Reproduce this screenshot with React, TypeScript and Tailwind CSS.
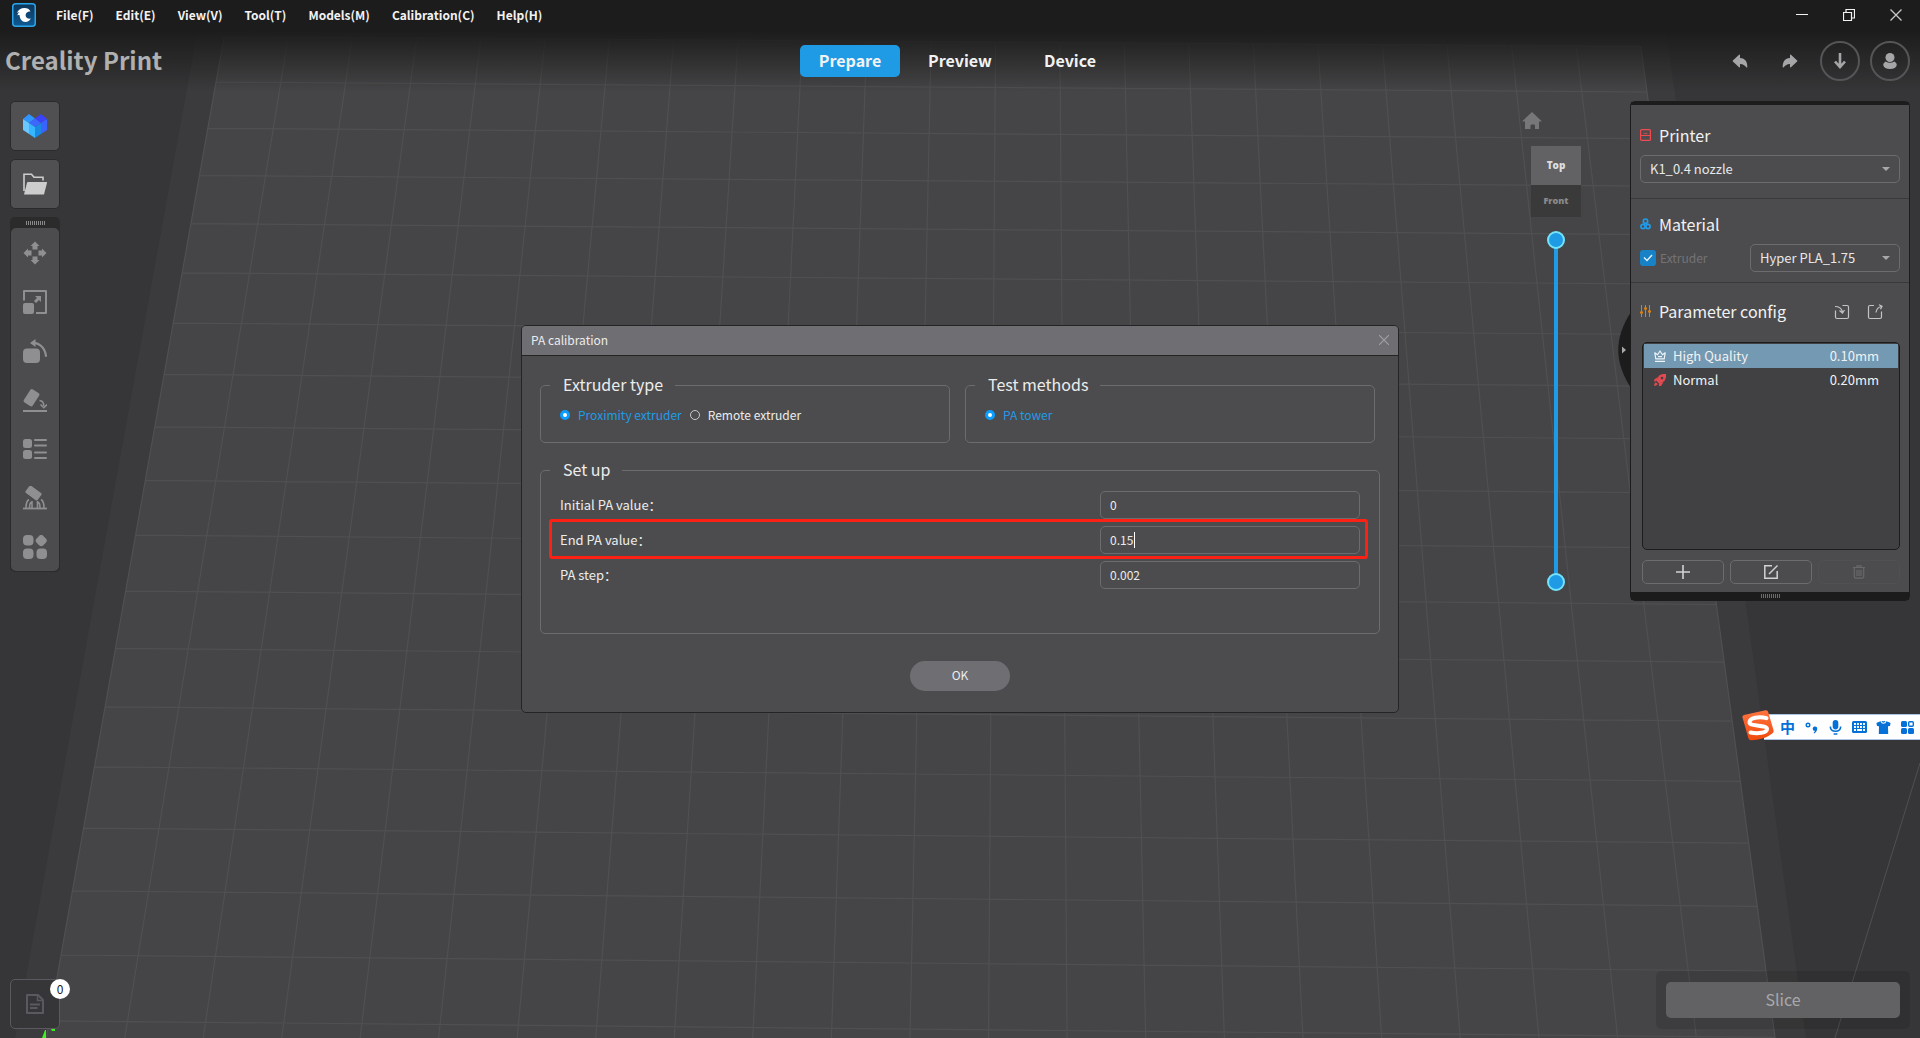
import React from "react";
import { IoArrowUndo, IoArrowRedo, IoShirt } from "react-icons/io5";

type Pt = [number, number];

/* ---------- build plate ---------- */

const COLS = 22;
const ROWS = 16;
const CORNERS: Pt[] = [
  [216, 82],
  [1647, 92],
  [1766, 971],
  [61, 955],
];

function makeProjector([p0, p1, p2, p3]: Pt[]) {
  const dx1 = p1[0] - p2[0];
  const dx2 = p3[0] - p2[0];
  const dx3 = p0[0] - p1[0] + p2[0] - p3[0];
  const dy1 = p1[1] - p2[1];
  const dy2 = p3[1] - p2[1];
  const dy3 = p0[1] - p1[1] + p2[1] - p3[1];
  const den = dx1 * dy2 - dx2 * dy1;
  const g = (dx3 * dy2 - dx2 * dy3) / den;
  const h = (dx1 * dy3 - dx3 * dy1) / den;
  const a = p1[0] - p0[0] + g * p1[0];
  const b = p3[0] - p0[0] + h * p3[0];
  const d = p1[1] - p0[1] + g * p1[1];
  const e = p3[1] - p0[1] + h * p3[1];
  return (col: number, row: number): Pt => {
    const u = col / COLS;
    const v = row / ROWS;
    const w = g * u + h * v + 1;
    return [(a * u + b * v + p0[0]) / w, (d * u + e * v + p0[1]) / w];
  };
}

const project = makeProjector(CORNERS);
const FIRST_ROW = -1;
const LAST_ROW = 18;

function segment(from: Pt, to: Pt) {
  return `M${from[0].toFixed(1)} ${from[1].toFixed(1)}L${to[0].toFixed(1)} ${to[1].toFixed(1)}`;
}

const gridPath = [
  ...Array.from({ length: COLS + 1 }, (_, c) => segment(project(c, FIRST_ROW), project(c, LAST_ROW))),
  ...Array.from({ length: LAST_ROW - FIRST_ROW + 1 }, (_, i) =>
    segment(project(0, i + FIRST_ROW), project(COLS, i + FIRST_ROW)),
  ),
].join("");

const platePoints = [
  project(0, FIRST_ROW),
  project(COLS, FIRST_ROW),
  project(COLS, LAST_ROW),
  project(0, LAST_ROW),
]
  .map((p) => p.join(","))
  .join(" ");

function Scene() {
  return (
    <svg
      className="absolute inset-0 h-full w-full"
      viewBox="0 0 1920 1038"
      preserveAspectRatio="none"
      aria-hidden="true"
    >
      <rect width="1920" height="1038" fill="#363638" />
      <polygon points="203,0 1662,0 1806,1038 15,1038" fill="#3b3b3d" />
      <polygon points={platePoints} fill="#454547" />
      <path d={gridPath} stroke="#505052" strokeWidth="1.2" fill="none" />
      <path d="M1920 763L1835 1038" stroke="#505052" strokeWidth="1" />
      <path d="M45 1030h1v8h-4z" fill="#3df01e" />
      <path d="M51 1029h4v2h-3z" fill="#3df01e" />
    </svg>
  );
}

/* ---------- icons ---------- */

function AppLogo() {
  return (
    <svg className="size-6" viewBox="0 0 24 24" aria-hidden="true">
      <defs>
        <linearGradient id="logoFill" x1="0" y1="0" x2="0" y2="1">
          <stop offset="0" stopColor="#0d3557" />
          <stop offset="1" stopColor="#0f5a94" />
        </linearGradient>
      </defs>
      <rect x="0.75" y="0.75" width="22.5" height="22.5" rx="3" fill="url(#logoFill)" stroke="#2aa5ea" strokeWidth="1.5" />
      <path
        d="M18.500 8.500C17.500 6 15.300 5 12.500 5 9 5 6.300 6.800 5 10c1-.7 1.800-.9 2.500-.8-1.300 1-2 2-2.200 3.300.8-.5 1.500-.6 2.200-.4C7.800 16.200 10 19 13.300 19c2.500 0 4.500-1.200 5.400-3.400-1.500.3-2.800.1-3.700-.6-1.500-1.200-1.800-3.200-.8-4.700.9-1.400 2.500-1.900 4.300-1.800z"
        fill="#fff"
      />
    </svg>
  );
}

function CubesIcon() {
  return (
    <svg className="size-6" viewBox="0 0 24 24" aria-hidden="true">
      <polygon points="0,5 6,0 12,4.500 6,9" fill="#2f96ff" />
      <polygon points="12,4.500 18,0 24,5 18,9" fill="#3a42fb" />
      <polygon points="6,9 12,4.500 18,9 12,13" fill="#3b68ff" />
      <polygon points="0,5 6,9 6,20 0,16" fill="#68c8ff" />
      <polygon points="6,9 12,13 12,24 6,20" fill="#36b6ff" />
      <polygon points="12,13 18,9 18,20 12,24" fill="#1a89e2" />
      <polygon points="18,9 24,5 24,16 18,20" fill="#3a64ff" />
    </svg>
  );
}

function FolderIcon() {
  return (
    <svg className="size-6" viewBox="0 0 24 24" aria-hidden="true">
      <path d="M1 19V2.200h7.500l2.500 3h9v3.300" fill="none" stroke="#cdcdcd" strokeWidth="1.600" />
      <path d="M5 10h18.500q.6 0 .5.700L21 22.500H1L4 10.700q.2-.7 1-.7z" fill="#cdcdcd" />
    </svg>
  );
}

function MoveIcon() {
  const arrow = "M12 0.500l4.500 4.500h-2v3.500h-5V5h-2z";
  return (
    <svg className="size-6" viewBox="0 0 24 24" fill="currentColor" aria-hidden="true">
      <path d={arrow} />
      <path d={arrow} transform="rotate(90 12 12)" />
      <path d={arrow} transform="rotate(180 12 12)" />
      <path d={arrow} transform="rotate(270 12 12)" />
    </svg>
  );
}

function ScaleIcon() {
  return (
    <svg className="size-6" viewBox="0 0 24 24" fill="currentColor" aria-hidden="true">
      <path d="M1 10.500V1h22v22H13" fill="none" stroke="currentColor" strokeWidth="2" strokeLinejoin="round" />
      <rect x="0" y="13" width="11" height="11" rx="2" />
      <path d="M12 12l4-4" stroke="currentColor" strokeWidth="3" />
      <path d="M12 6h6v6z" />
    </svg>
  );
}

function RotateIcon() {
  return (
    <svg className="size-6" viewBox="0 0 24 24" fill="currentColor" aria-hidden="true">
      <rect x="0" y="9.500" width="17" height="14.500" rx="4" />
      <path d="M10 3.800c7 0 12.500 6 13 14" fill="none" stroke="currentColor" strokeWidth="2.200" />
      <path d="M7 4l5.500-4v8z" />
    </svg>
  );
}

function LayFlatIcon() {
  return (
    <svg className="size-6" viewBox="0 0 24 24" fill="currentColor" aria-hidden="true">
      <rect x="3.300" y="2" width="10.500" height="15.500" rx="2" transform="rotate(33 8.500 9.700)" />
      <rect x="0" y="22" width="24" height="2" />
      <path d="M16.500 12.500c2.800.2 4.300 2.200 4.300 5.500" fill="none" stroke="currentColor" strokeWidth="1.600" />
      <path d="M17.500 16.500l3.300 3.200 3.200-3.200" fill="none" stroke="currentColor" strokeWidth="1.600" />
    </svg>
  );
}

function ListIcon() {
  return (
    <svg className="size-6" viewBox="0 0 24 24" fill="currentColor" aria-hidden="true">
      <rect x="0" y="2" width="9" height="9" rx="2.500" />
      <rect x="0" y="13" width="9" height="9" rx="2.500" />
      <path d="M12 3h11M12 8.500h11M12 15.500h11M12 21h11" stroke="currentColor" strokeWidth="2" strokeLinecap="round" />
    </svg>
  );
}

function SupportIcon() {
  return (
    <svg className="size-6" viewBox="0 0 24 24" fill="currentColor" aria-hidden="true">
      <rect x="3" y="2.500" width="15" height="9" rx="1.500" transform="rotate(36 10.500 7)" />
      <path d="M0 22.500h24" stroke="currentColor" strokeWidth="1.800" />
      <path
        d="M3 22c0-4 .5-7 3-8.500M9 22v-7M14.500 22v-7M21 22c0-4-.5-7-3-8.500M9 16c-2.500 0-2.500 3-2.500 6M14.500 16c2.500 0 2.500 3 2.500 6"
        fill="none"
        stroke="currentColor"
        strokeWidth="1.600"
      />
    </svg>
  );
}

function MoreToolsIcon() {
  return (
    <svg className="size-6" viewBox="0 0 24 24" fill="currentColor" aria-hidden="true">
      <rect x="0" y="0" width="10.500" height="10.500" rx="4" />
      <rect x="13.500" y="0.800" width="9.500" height="9.500" rx="3" transform="rotate(45 18.250 5.500)" />
      <rect x="0" y="13.500" width="10.500" height="10.500" rx="4" />
      <rect x="13.500" y="13.500" width="10.500" height="10.500" rx="4" />
    </svg>
  );
}

function PrinterIcon() {
  return (
    <svg className="h-3 w-[11px]" viewBox="0 0 11 12" fill="none" stroke="#ef4a4f" aria-hidden="true">
      <rect x="0.600" y="0.600" width="9.800" height="10.800" rx="1" strokeWidth="1.200" />
      <path d="M0.600 6.500h9.800" />
      <path d="M3.500 4.500h4" strokeWidth="1.500" opacity=".6" />
    </svg>
  );
}

function MaterialIcon() {
  return (
    <svg className="h-3 w-[11px]" viewBox="0 0 11 12" fill="none" stroke="#219bea" strokeWidth="1.700" aria-hidden="true">
      <circle cx="5.500" cy="3.200" r="2.200" />
      <circle cx="3" cy="8.500" r="2.100" />
      <circle cx="8" cy="8.500" r="2.100" />
    </svg>
  );
}

function SlidersIcon() {
  return (
    <svg className="h-3 w-[11px]" viewBox="0 0 11 12" stroke="#d9820f" fill="#d9820f" aria-hidden="true">
      <path d="M1.500 0v12M5.500 0v12M9.500 0v12" strokeWidth="1" />
      <path d="M0 7.500h3M4 3.500h3M8 6.500h3" strokeWidth="2" />
    </svg>
  );
}

function ImportIcon() {
  return (
    <svg className="size-4" viewBox="0 0 16 16" fill="none" stroke="#c4c4c6" strokeWidth="1.200" aria-hidden="true">
      <path d="M8.500 1.500H13q1.500 0 1.500 1.500v10q0 1.500-1.500 1.500H3q-1.500 0-1.500-1.500V6.500" />
      <path d="M1 2.500c3.500 0 6.500 1.500 7.500 5.500M5.500 6.500l3 2.500 2-3" />
    </svg>
  );
}

function ExportIcon() {
  return (
    <svg className="size-4" viewBox="0 0 16 16" fill="none" stroke="#c4c4c6" strokeWidth="1.200" aria-hidden="true">
      <path d="M7 1.500H3q-1.500 0-1.500 1.500v10q0 1.500 1.500 1.500h10q1.500 0 1.500-1.500V7.500" />
      <path d="M9 8.500c.5-3.500 2-5.500 5.500-6M12 .8l3 1.500-1.500 3" />
    </svg>
  );
}

function CrownIcon() {
  return (
    <svg className="h-3 w-3" viewBox="0 0 12 12" fill="none" stroke="#eef4f8" strokeWidth="1.200" aria-hidden="true">
      <path d="M1.800 8.800L.8 2.800l2.800 2L6 1l2.400 3.800 2.800-2-1 6z" strokeLinejoin="round" />
      <path d="M1 11.400h10M4 6.700h4" />
    </svg>
  );
}

function RocketIcon() {
  return (
    <svg className="h-3 w-3" viewBox="0 0 12 12" fill="#e04a50" fillRule="evenodd" aria-hidden="true">
      <path d="M12 0v3.500L10.500 7 5.500 10 2.300 6.700 5 1.500 8.500 0zM8 2.800a1.300 1.300 0 1 0 0 2.600 1.300 1.300 0 0 0 0-2.600z" />
      <path d="M4 3L.2 5.500.3 7.700 2.500 7zM9.500 8L7 12H5l-.2-2.500z" />
      <path d="M1.800 8.300L.2 10v1.800H2L3.700 10z" />
    </svg>
  );
}

function EditIcon() {
  return (
    <svg className="size-4" viewBox="0 0 16 16" fill="none" stroke="#d2d2d4" strokeWidth="1.500" aria-hidden="true">
      <path d="M9 1.800H1.800v12.400h12.400V7" />
      <path d="M6 10L14.500 1.500" />
    </svg>
  );
}

function TrashIcon() {
  return (
    <svg className="h-[14px] w-3" viewBox="0 0 12 14" fill="none" stroke="#68686a" strokeWidth="1.200" aria-hidden="true">
      <path d="M0 2.500h12M4 2.500V.800h4v1.700M1.300 3v8.500q0 1.700 1.500 1.700h6.400q1.500 0 1.500-1.700V3M4 5v6M6 5v6M8 5v6" />
    </svg>
  );
}

function HomeIcon() {
  return (
    <svg className="h-[17px] w-5" viewBox="0 0 20 17" fill="#77777a" aria-hidden="true">
      <path d="M10 0l10 9.500h-3V17h-4v-3.500q0-1-1-1H10q-1.500 0-1.500 1V17H3V9.500H0z" />
    </svg>
  );
}

function DocumentIcon() {
  return (
    <svg className="h-5 w-[18px]" viewBox="0 0 18 20" fill="none" stroke="#5a595f" strokeWidth="2" aria-hidden="true">
      <path d="M1 1h11l5 5v13H1z" strokeLinejoin="round" />
      <path d="M11.500 1v5.500H17" strokeWidth="1.500" />
      <path d="M4 10.500h10M4 14h7.500" />
    </svg>
  );
}

function SogouLogo() {
  return (
    <svg className="absolute -top-[5px] -left-[22px] h-[31px] w-8" viewBox="0 0 32 31" aria-hidden="true">
      <defs>
        <linearGradient id="sogou" x1="0" y1="0" x2="0" y2="1">
          <stop offset="0" stopColor="#ff7440" />
          <stop offset="1" stopColor="#f04a0c" />
        </linearGradient>
      </defs>
      <path d="M2 5L23.500.3q2-.4 2.600 1.500L31.500 20q.6 2-1 3.200C26 27 20 29.500 9 30.200q-2 .1-2.500-1.700L.5 7.500Q0 5.500 2 5z" fill="url(#sogou)" />
      <path d="M24.500 8.200C17 5.800 7.500 8 7.500 12.200c0 4.800 17.500 2.300 17.500 6.800 0 4-9.500 5-16.500 3.500" fill="none" stroke="#fff" strokeWidth="4" strokeLinecap="round" />
    </svg>
  );
}

/* ---------- header ---------- */

const MENUS = ["File(F)", "Edit(E)", "View(V)", "Tool(T)", "Models(M)", "Calibration(C)", "Help(H)"];
const TABS = ["Prepare", "Preview", "Device"];

function Header() {
  return (
    <header className="bg-linear-to-b from-[#1c1c1c] from-33% to-transparent">
      <div className="flex h-[30px] items-center justify-between pl-3">
        <div className="flex items-center gap-5">
          <AppLogo />
          <nav className="flex gap-[22px] text-xs leading-5 font-bold">
            {MENUS.map((menu) => (
              <button key={menu} type="button">
                {menu}
              </button>
            ))}
          </nav>
        </div>
        <div className="flex items-center gap-[35px] pr-[18px] text-[#f2f2f2]">
          <button type="button" aria-label="Minimize">
            <svg className="size-3" viewBox="0 0 12 12" aria-hidden="true">
              <path d="M0 5.500h12" stroke="currentColor" />
            </svg>
          </button>
          <button type="button" aria-label="Restore">
            <svg className="size-3" viewBox="0 0 12 12" fill="none" stroke="currentColor" aria-hidden="true">
              <path d="M.5 3.500h8v8h-8zM3 3V.5h8.500V9H9" strokeWidth="1.200" />
            </svg>
          </button>
          <button type="button" aria-label="Close">
            <svg className="size-3" viewBox="0 0 12 12" stroke="#c8c8c8" strokeWidth="1.300" aria-hidden="true">
              <path d="M.5.5l11 11M11.500.5l-11 11" />
            </svg>
          </button>
        </div>
      </div>
      <div className="grid h-[62px] grid-cols-[1fr_auto_1fr] items-center">
        <h1 className="pb-0.5 pl-[5px] text-2xl font-bold text-[#b0b0b0]">Creality Print</h1>
        <nav className="flex gap-[10px] text-base leading-[30px] font-bold">
          {TABS.map((tab, i) => (
            <button
              key={tab}
              type="button"
              aria-current={i === 0 ? "page" : undefined}
              className={i === 0 ? "h-8 w-[100px] rounded-[5px] bg-[#1f9be6] pb-0.5" : "h-8 w-[100px] pb-0.5"}
            >
              {tab}
            </button>
          ))}
        </nav>
        <div className="flex items-center justify-end gap-[10px] pr-[10px] text-[#a6a6a9]">
          <button type="button" aria-label="Undo" className="flex size-10 items-center justify-center">
            <IoArrowUndo size={18} />
          </button>
          <button type="button" aria-label="Redo" className="flex size-10 items-center justify-center">
            <IoArrowRedo size={18} />
          </button>
          <button
            type="button"
            aria-label="Downloads"
            className="flex size-10 items-center justify-center rounded-full border-2 border-[#555558]"
          >
            <svg className="h-4 w-3" viewBox="0 0 12 16" fill="none" stroke="currentColor" strokeWidth="2.600" aria-hidden="true">
              <path d="M6 0v14M1 8.500l5 5.500 5-5.500" />
            </svg>
          </button>
          <button
            type="button"
            aria-label="Account"
            className="flex size-10 items-center justify-center rounded-full border-2 border-[#555558]"
          >
            <svg className="h-4 w-[14px]" viewBox="0 0 14 16" fill="currentColor" aria-hidden="true">
              <circle cx="7" cy="4.500" r="4.500" />
              <path d="M2.500 8.500q4.500 2.500 9 0Q14 10 13.800 12 13 16 7 16T.2 12Q0 10 2.500 8.500z" />
            </svg>
          </button>
        </div>
      </div>
    </header>
  );
}

/* ---------- left tools ---------- */

function Grip({ count, tone }: { count: number; tone: string }) {
  return (
    <div className="flex h-1 justify-center gap-px" aria-hidden="true">
      {Array.from({ length: count }, (_, i) => (
        <span key={i} className={`w-px ${tone}`} />
      ))}
    </div>
  );
}

const TOOLS = [
  { name: "Move", Icon: MoveIcon },
  { name: "Scale", Icon: ScaleIcon },
  { name: "Rotate", Icon: RotateIcon },
  { name: "Lay flat", Icon: LayFlatIcon },
  { name: "Model list", Icon: ListIcon },
  { name: "Support", Icon: SupportIcon },
  { name: "More tools", Icon: MoreToolsIcon },
];

function ToolColumn() {
  const single = "flex size-[50px] items-center justify-center rounded-[5px] border border-[#2b2b2c] bg-[#505052]";
  return (
    <aside className="flex flex-col gap-2">
      <button type="button" aria-label="Models" className={single}>
        <CubesIcon />
      </button>
      <button type="button" aria-label="Open file" className={single}>
        <FolderIcon />
      </button>
      <div className="w-[50px] rounded-[5px] bg-[#2b2b2c] px-px pb-px">
        <div className="flex h-[11px] items-center justify-center pt-px">
          <Grip count={10} tone="bg-[#8a8a8c]" />
        </div>
        <div className="flex flex-col rounded-[5px] bg-[#4c4c4e] text-[#8f8f91]">
          {TOOLS.map(({ name, Icon }) => (
            <button key={name} type="button" aria-label={name} className="flex h-[49px] items-center justify-center">
              <Icon />
            </button>
          ))}
        </div>
      </div>
    </aside>
  );
}

/* ---------- view cube and layer slider ---------- */

function ViewControls() {
  const range =
    "pointer-events-none absolute inset-0 h-full w-full appearance-none bg-transparent [direction:rtl] [writing-mode:vertical-lr] [&::-webkit-slider-thumb]:pointer-events-auto [&::-webkit-slider-thumb]:size-[18px] [&::-webkit-slider-thumb]:appearance-none [&::-webkit-slider-thumb]:rounded-full [&::-webkit-slider-thumb]:border-2 [&::-webkit-slider-thumb]:border-[#74e4fb] [&::-webkit-slider-thumb]:bg-[#1f9be6]";
  return (
    <div className="mt-[11px] mr-[49px] flex w-[50px] flex-col items-center font-['Open_Sans',sans-serif]">
      <button type="button" aria-label="Home view" className="mr-12">
        <HomeIcon />
      </button>
      <div className="mt-[17px] flex w-full flex-col font-extrabold">
        <button type="button" className="h-[39px] bg-[#626264] text-[10px] text-[#dcdcdc]">
          Top
        </button>
        <button type="button" className="h-8 bg-[#3a3a3b] text-[9px] text-[#8a8a8a]">
          Front
        </button>
      </div>
      <div className="relative mt-[14px] flex h-[360px] w-[18px] justify-center py-2">
        <div className="w-1 bg-[#1f9be6]" />
        <input type="range" aria-label="Bottom layer" defaultValue={0} className={range} />
        <input type="range" aria-label="Top layer" defaultValue={100} className={range} />
      </div>
    </div>
  );
}

/* ---------- settings panel ---------- */

function Dropdown({ label, value, width }: { label: string; value: string; width: string }) {
  return (
    <div className={`relative ${width}`}>
      <select
        aria-label={label}
        defaultValue={value}
        className="h-7 w-full appearance-none rounded-[5px] border border-[#6c6c6f] bg-transparent px-[9px] text-[13px] leading-5 text-[#e8e8e8]"
      >
        <option>{value}</option>
      </select>
      <svg className="pointer-events-none absolute top-3 right-[10px] h-1 w-2" viewBox="0 0 8 4" aria-hidden="true">
        <path d="M0 0h8L4 4z" fill="#a8a8aa" />
      </svg>
    </div>
  );
}

const PROFILES = [
  { name: "High Quality", height: "0.10mm", selected: true },
  { name: "Normal", height: "0.20mm", selected: false },
];

function SettingsPanel() {
  const heading = "flex h-6 items-center gap-2 pb-0.5 text-base leading-[22px]";
  const action = "flex h-6 flex-1 items-center justify-center rounded-[5px] border";
  return (
    <aside className="relative w-[280px] rounded-[5px] border border-[#1c1c1c] bg-[#4c4c4e]">
      <button
        type="button"
        aria-label="Collapse panel"
        className="absolute top-[210px] -left-[13px] flex h-[76px] w-[13px] items-center"
      >
        <svg className="h-full w-full" viewBox="0 0 13 76" aria-hidden="true">
          <path d="M13 0C-4 26-4 50 13 76z" fill="#1c1c1c" />
          <path d="M4 34.500v7l4-3.500z" fill="#a8a8aa" />
        </svg>
      </button>
      <div className="h-[3px] bg-[#1c1c1c]" />
      <section className="border-b border-[#39393b] px-[9px] pt-[19px] pb-[15px]">
        <h2 className={heading}>
          <PrinterIcon />
          Printer
        </h2>
        <div className="mt-[7px]">
          <Dropdown label="Printer" value="K1_0.4 nozzle" width="w-full" />
        </div>
      </section>
      <section className="border-b border-[#39393b] px-[9px] pt-[14px] pb-[10px]">
        <h2 className={heading}>
          <MaterialIcon />
          Material
        </h2>
        <div className="mt-[7px] flex items-center justify-between">
          <label className="flex items-center gap-[5px] text-xs text-[#737376]">
            <input
              type="checkbox"
              defaultChecked
              className="peer size-4 appearance-none rounded-[3px] bg-[#1882c6]"
            />
            <svg className="pointer-events-none -ml-[18px] mr-[2px] h-2 w-[10px]" viewBox="0 0 10 8" fill="none" stroke="#e4f2fb" strokeWidth="1.400" aria-hidden="true">
              <path d="M1 3.500l3 3L9 1" />
            </svg>
            Extruder
          </label>
          <Dropdown label="Material" value="Hyper PLA_1.75" width="w-[150px]" />
        </div>
      </section>
      <section className="px-[9px] pt-[17px] pb-2">
        <div className="flex items-center justify-between pr-[17px]">
          <h2 className={heading}>
            <SlidersIcon />
            Parameter config
          </h2>
          <div className="flex gap-[17px]">
            <button type="button" aria-label="Import configuration">
              <ImportIcon />
            </button>
            <button type="button" aria-label="Export configuration">
              <ExportIcon />
            </button>
          </div>
        </div>
        <ul className="mt-[18px] ml-0.5 h-52 rounded-[5px] border border-[#1c1c1c] bg-[#414143] p-px text-[13px] leading-6">
          {PROFILES.map((profile) => (
            <li key={profile.name}>
              <button
                type="button"
                aria-pressed={profile.selected}
                className={
                  profile.selected
                    ? "flex h-6 w-full items-center gap-[7px] bg-[#7499b2] pr-[19px] pl-[10px]"
                    : "flex h-6 w-full items-center gap-[7px] pr-[19px] pl-[10px]"
                }
              >
                {profile.selected ? <CrownIcon /> : <RocketIcon />}
                <span>{profile.name}</span>
                <span className="ml-auto">{profile.height}</span>
              </button>
            </li>
          ))}
        </ul>
        <div className="mt-[10px] ml-0.5 flex gap-[6px]">
          <button type="button" aria-label="Add profile" className={`${action} border-[#6c6c6f]`}>
            <svg className="size-[14px]" viewBox="0 0 14 14" stroke="#d2d2d4" strokeWidth="1.600" aria-hidden="true">
              <path d="M7 0v14M0 7h14" />
            </svg>
          </button>
          <button type="button" aria-label="Edit profile" className={`${action} border-[#6c6c6f]`}>
            <EditIcon />
          </button>
          <button type="button" aria-label="Delete profile" disabled className={`${action} border-[#505052]`}>
            <TrashIcon />
          </button>
        </div>
      </section>
      <div className="flex h-2 items-center justify-center bg-[#1c1c1c]">
        <Grip count={10} tone="bg-[#6c6c6f]" />
      </div>
    </aside>
  );
}

/* ---------- dialog ---------- */

function RadioOption({ group, label, checked }: { group: string; label: string; checked?: boolean }) {
  return (
    <label className="flex items-center gap-2 text-xs leading-5 has-checked:text-[#1f9be6]">
      <input
        type="radio"
        name={group}
        defaultChecked={checked}
        className="size-[10px] appearance-none rounded-full border border-[#c8c8c8] checked:border-[3px] checked:border-[#0c9dff] checked:bg-white"
      />
      {label}
    </label>
  );
}

function GroupLegend({ title }: { title: string }) {
  return <legend className="-ml-[10px] pr-3 pb-0.5 pl-[13px] text-base leading-[22px]">{title}</legend>;
}

function OptionGroup({ title, children }: { title: string; children: React.ReactNode }) {
  return (
    <fieldset className="h-[70px] flex-1 rounded-[5px] border border-[#6c6c6f] pl-[19px]">
      <GroupLegend title={title} />
      <div className="mt-2 flex gap-2">{children}</div>
    </fieldset>
  );
}

const FIELDS = [
  { id: "initial-pa", label: "Initial PA value：", value: "0" },
  { id: "end-pa", label: "End PA value：", value: "0.15" },
  { id: "pa-step", label: "PA step：", value: "0.002" },
];

function CalibrationDialog() {
  return (
    <div className="absolute inset-0 flex items-center justify-center">
      <form
        role="dialog"
        aria-labelledby="dialog-title"
        className="w-[878px] rounded-[5px] border border-[#242425] bg-[#4c4c4e] text-[#ececec]"
      >
        <div className="flex h-[30px] items-center justify-between rounded-t-[4px] border-b border-[#242425] bg-[#6f6e73] pr-[9px] pb-0.5 pl-[9px]">
          <h2 id="dialog-title" className="text-xs leading-5">
            PA calibration
          </h2>
          <button type="button" aria-label="Close dialog">
            <svg className="size-[10px]" viewBox="0 0 10 10" stroke="#a3a3a6" strokeWidth="1.100" aria-hidden="true">
              <path d="M0 0l10 10M10 0L0 10" />
            </svg>
          </button>
        </div>
        <div className="px-[18px] pt-[17px] pb-[21px]">
          <div className="flex gap-[15px] pr-[5px]">
            <OptionGroup title="Extruder type">
              <RadioOption group="extruder" label="Proximity extruder" checked />
              <RadioOption group="extruder" label="Remote extruder" />
            </OptionGroup>
            <OptionGroup title="Test methods">
              <RadioOption group="method" label="PA tower" checked />
            </OptionGroup>
          </div>
          <fieldset className="mt-[15px] h-[176px] rounded-[5px] border border-[#6c6c6f] px-[19px]">
            <GroupLegend title="Set up" />
            <div className="mt-[9px] flex flex-col gap-[7px]">
              {FIELDS.map((field) => (
                <div key={field.id} className="relative flex items-center justify-between">
                  <label htmlFor={field.id} className="text-[13px] leading-5">
                    {field.label}
                  </label>
                  <div className="relative w-[260px]">
                    <input
                      id={field.id}
                      type="text"
                      defaultValue={field.value}
                      className="block h-7 w-full rounded-[5px] border border-[#6c6c6f] bg-transparent px-[9px] pb-0.5 text-xs leading-5 outline-none"
                    />
                    {field.id === "end-pa" && (
                      <span className="absolute top-[6px] left-[34px] h-4 w-px bg-white" aria-hidden="true" />
                    )}
                  </div>
                  {field.id === "end-pa" && (
                    <div
                      className="pointer-events-none absolute -top-[7px] -right-2 -bottom-[5px] -left-[11px] rounded-[3px] border-3 border-[#fc2114]"
                      aria-hidden="true"
                    />
                  )}
                </div>
              ))}
            </div>
          </fieldset>
          <div className="mt-[27px] flex justify-center">
            <button type="submit" className="h-[30px] w-[100px] rounded-full bg-[#6f6e73] pb-0.5 text-xs">
              OK
            </button>
          </div>
        </div>
      </form>
    </div>
  );
}

/* ---------- input method bar ---------- */

function InputMethodBar() {
  return (
    <div className="absolute top-[714px] right-0 flex h-[26px] items-center gap-[9px] border-y border-[#a9c4e6] bg-white pr-[5px] pl-4 text-[#0470d8]">
      <SogouLogo />
      <button type="button" aria-label="Language" className="w-[15px] text-[15px] leading-5 font-bold">
        中
      </button>
      <button type="button" aria-label="Punctuation">
        <svg className="size-[15px]" viewBox="0 0 15 15" aria-hidden="true">
          <circle cx="4" cy="5" r="1.800" fill="none" stroke="currentColor" strokeWidth="1.400" />
          <path d="M10.500 6.500c2.300-.2 3.300 1.500 2.500 3.500-.5 1.500-1.500 2.800-2.800 3.500l-.6-.8c.8-.6 1.200-1.200 1.400-1.900-1.300.2-2.300-.7-2.300-2 0-1.200.8-2.200 1.800-2.300z" fill="currentColor" />
        </svg>
      </button>
      <button type="button" aria-label="Voice input">
        <svg className="size-[15px]" viewBox="0 0 15 16" aria-hidden="true">
          <rect x="4.500" y="0" width="6" height="10" rx="3" fill="currentColor" />
          <path d="M2 7c0 3.500 2.500 5 5.500 5S13 10.500 13 7M5.500 15h4" fill="none" stroke="currentColor" strokeWidth="1.700" />
        </svg>
      </button>
      <button type="button" aria-label="Keyboard">
        <svg className="h-3 w-[15px]" viewBox="0 0 15 12" aria-hidden="true">
          <rect x="0" y="0" width="15" height="12" rx="1.500" fill="currentColor" />
          <path d="M2 3h11M2 6h11" stroke="#fff" strokeWidth="1.800" strokeDasharray="1.900 1.100" />
          <path d="M2 9h2M5 9h5M11 9h2" stroke="#fff" strokeWidth="1.800" />
        </svg>
      </button>
      <button type="button" aria-label="Skins">
        <IoShirt size={15} />
      </button>
      <button type="button" aria-label="Toolbox" className="flex w-[15px] justify-center">
        <svg className="size-[13px]" viewBox="0 0 13 13" fill="currentColor" aria-hidden="true">
          <rect x="0" y="0" width="6" height="6" rx="1.500" />
          <rect x="7.700" y="0.700" width="4.600" height="4.600" rx="1" fill="none" stroke="currentColor" strokeWidth="1.400" />
          <rect x="0" y="7" width="6" height="6" rx="1.500" />
          <rect x="7" y="7" width="6" height="6" rx="1.500" />
        </svg>
      </button>
    </div>
  );
}

export default function App() {
  return (
    <div className="relative flex min-h-screen flex-col overflow-hidden bg-[#363638] font-['Noto_Sans_CJK_SC',sans-serif] text-[#f2f2f2]">
      <Scene />
      <div className="relative flex flex-1 flex-col">
        <Header />
        <main className="flex flex-1 items-start px-[10px] pt-[9px]">
          <ToolColumn />
          <div className="ml-auto flex items-start">
            <ViewControls />
            <SettingsPanel />
          </div>
        </main>
        <footer className="flex items-end justify-between px-[10px] pb-[9px]">
          <button
            type="button"
            aria-label="Messages"
            className="relative flex size-[50px] items-center justify-center rounded-[5px] border border-[#5a595f] bg-[#363638]"
          >
            <DocumentIcon />
            <span className="absolute -top-px -right-[11px] size-5 rounded-full bg-white text-center text-xs leading-5 text-[#222]">
              0
            </span>
          </button>
          <div className="rounded-[5px] bg-black/10 px-[10px] py-[11px]">
            <button type="button" className="h-9 w-[234px] rounded-[5px] bg-[#626264] pb-0.5 text-base text-[#a9a9ab]">
              Slice
            </button>
          </div>
        </footer>
      </div>
      <CalibrationDialog />
      <InputMethodBar />
    </div>
  );
}
